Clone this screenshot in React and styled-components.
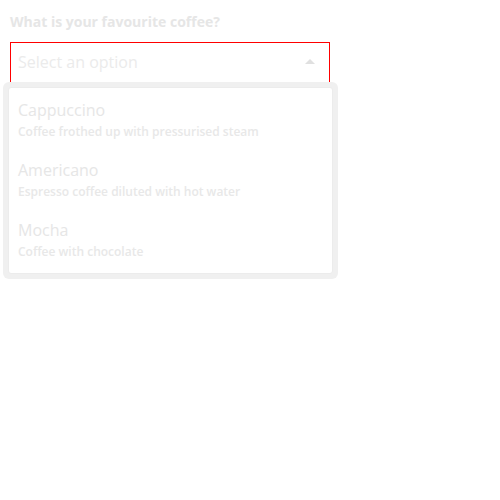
import React from "react";
import styled, { createGlobalStyle } from "styled-components";

const GlobalStyle = createGlobalStyle`
  body {
    margin: 0;
    background: #ffffff;
    font-family: "Open Sans", "Noto Sans", sans-serif;
  }
`;

const Page = styled.div`
  padding: 13px 10px;
  width: 320px;
`;

const Label = styled.label`
  display: block;
  font-size: 14px;
  font-weight: 700;
  color: #e6e6e6;
  line-height: 18px;
  margin-bottom: 11px;
`;

const SelectWrap = styled.div`
  display: flex;
  flex-direction: column;
`;

const SelectBox = styled.div`
  display: flex;
  align-items: center;
  justify-content: space-between;
  height: 40px;
  padding: 0 14px 2px 7px;
  box-sizing: border-box;
  border: 1px solid #ff0000;
  border-bottom: none;
  font-size: 16px;
  color: #ebebeb;
`;

const Caret = styled.span`
  width: 0;
  height: 0;
  border-left: 5px solid transparent;
  border-right: 5px solid transparent;
  border-bottom: 5px solid #e0e0e0;
`;

const Menu = styled.div`
  margin: 0 0 0 -7px;
  width: 325px;
  padding: 5px;
  background: #f0f0f0;
  border-radius: 6px;
`;

const MenuInner = styled.div`
  padding: 6px 0 0;
  background: #ffffff;
  border: 1px solid #ececec;
  border-radius: 3px;
`;

const Item = styled.div`
  padding: 4px 9px 8px;
  height: 48px;

  &:last-child {
    padding-bottom: 7px;
  }
`;

const ItemTitle = styled.div`
  font-size: 16px;
  line-height: 25px;
  color: #e6e6e6;
`;

const ItemDesc = styled.div`
  font-size: 12px;
  font-weight: 600;
  line-height: 18px;
  color: #e8e8e8;
`;

const options = [
  { title: "Cappuccino", desc: "Coffee frothed up with pressurised steam" },
  { title: "Americano", desc: "Espresso coffee diluted with hot water" },
  { title: "Mocha", desc: "Coffee with chocolate" },
];

const App = () => {
  return (
    <Page>
      <GlobalStyle />
      <Label>What is your favourite coffee?</Label>
      <SelectWrap>
        <SelectBox>
          <span>Select an option</span>
          <Caret />
        </SelectBox>
        <Menu>
          <MenuInner>
            {options.map((o) => (
              <Item key={o.title}>
                <ItemTitle>{o.title}</ItemTitle>
                <ItemDesc>{o.desc}</ItemDesc>
              </Item>
            ))}
          </MenuInner>
        </Menu>
      </SelectWrap>
    </Page>
  );
};

export default App;
